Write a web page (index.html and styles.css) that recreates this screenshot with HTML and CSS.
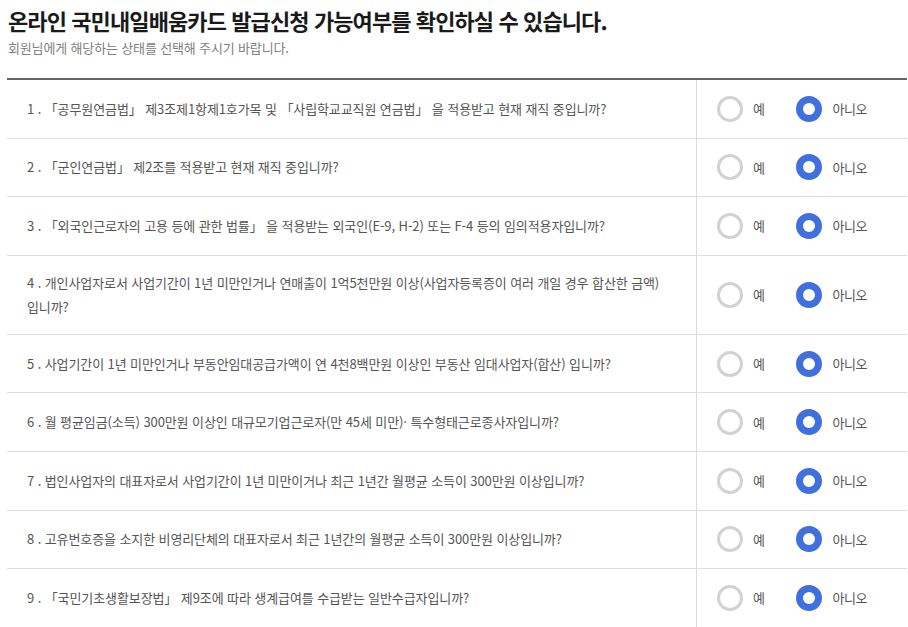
FILE: index.html
```html
<!DOCTYPE html>
<html lang="ko">
<head>
<meta charset="utf-8">
<title>국민내일배움카드 발급신청</title>
<link rel="stylesheet" href="styles.css">
</head>
<body>
<div class="page">
  <h1 class="title">온라인 국민내일배움카드 발급신청 가능여부를 확인하실 수 있습니다.</h1>
  <p class="subtitle">회원님에게 해당하는 상태를 선택해 주시기 바랍니다.</p>
  <div class="table">
    <div class="row">
      <div class="q">1 . 「공무원연금법」 제3조제1항제1호가목 및 「사립학교교직원 연금법」 을 적용받고 현재 재직 중입니까?</div>
      <div class="a"><span class="radio"></span><span class="lbl">예</span><span class="radio on"></span><span class="lbl">아니오</span></div>
    </div>
    <div class="row">
      <div class="q">2 . 「군인연금법」 제2조를 적용받고 현재 재직 중입니까?</div>
      <div class="a"><span class="radio"></span><span class="lbl">예</span><span class="radio on"></span><span class="lbl">아니오</span></div>
    </div>
    <div class="row">
      <div class="q">3 . 「외국인근로자의 고용 등에 관한 법률」 을 적용받는 외국인(E-9, H-2) 또는 F-4 등의 임의적용자입니까?</div>
      <div class="a"><span class="radio"></span><span class="lbl">예</span><span class="radio on"></span><span class="lbl">아니오</span></div>
    </div>
    <div class="row">
      <div class="q">4 . 개인사업자로서 사업기간이 1년 미만인거나 연매출이 1억5천만원 이상(사업자등록증이 여러 개일 경우 합산한 금액)<br>입니까?</div>
      <div class="a"><span class="radio"></span><span class="lbl">예</span><span class="radio on"></span><span class="lbl">아니오</span></div>
    </div>
    <div class="row">
      <div class="q">5 . 사업기간이 1년 미만인거나 부동안임대공급가액이 연 4천8백만원 이상인 부동산 임대사업자(합산) 입니까?</div>
      <div class="a"><span class="radio"></span><span class="lbl">예</span><span class="radio on"></span><span class="lbl">아니오</span></div>
    </div>
    <div class="row">
      <div class="q">6 . 월 평균임금(소득) 300만원 이상인 대규모기업근로자(만 45세 미만)· 특수형태근로종사자입니까?</div>
      <div class="a"><span class="radio"></span><span class="lbl">예</span><span class="radio on"></span><span class="lbl">아니오</span></div>
    </div>
    <div class="row">
      <div class="q">7 . 법인사업자의 대표자로서 사업기간이 1년 미만이거나 최근 1년간 월평균 소득이 300만원 이상입니까?</div>
      <div class="a"><span class="radio"></span><span class="lbl">예</span><span class="radio on"></span><span class="lbl">아니오</span></div>
    </div>
    <div class="row">
      <div class="q">8 . 고유번호증을 소지한 비영리단체의 대표자로서 최근 1년간의 월평균 소득이 300만원 이상입니까?</div>
      <div class="a"><span class="radio"></span><span class="lbl">예</span><span class="radio on"></span><span class="lbl">아니오</span></div>
    </div>
    <div class="row">
      <div class="q">9 . 「국민기초생활보장법」 제9조에 따라 생계급여를 수급받는 일반수급자입니까?</div>
      <div class="a"><span class="radio"></span><span class="lbl">예</span><span class="radio on"></span><span class="lbl">아니오</span></div>
    </div>
  </div>
</div>
</body>
</html>
```
FILE: styles.css
```css
* { box-sizing: border-box; }
html, body { margin: 0; padding: 0; background: #fff; }
body {
  font-family: "Noto Sans CJK KR", "Noto Sans", sans-serif;
  color: #555;
}
.page {
  padding: 5px 1px 0 7px;
}
.title {
  margin: 0 0 0 1px;
  font-size: 22px;
  line-height: 30px;
  font-weight: 700;
  color: #1a1a1a;
  letter-spacing: -0.9px;
}
.subtitle {
  margin: 4px 0 0 1px;
  font-size: 13px;
  line-height: 18px;
  color: #808080;
  letter-spacing: -0.15px;
}
.table {
  margin-top: 21px;
  border-top: 2px solid #666;
}
.row {
  position: relative;
  display: flex;
  min-height: 58.6px;
  border-bottom: 1px solid #ddd;
}
.row::after {
  content: "";
  position: absolute;
  left: 689px;
  top: 0;
  bottom: 0;
  width: 1px;
  background: #ddd;
}
.q {
  width: 690px;
  flex: none;
  align-self: center;
  padding: 15px 20px;
  font-size: 13px;
  line-height: 24px;
  letter-spacing: -0.1px;
  color: #555;
}
.a {
  flex: 1;
  display: flex;
  align-items: center;
  padding-left: 20px;
}
.radio {
  width: 26px;
  height: 26px;
  border-radius: 50%;
  border: 3px solid #d2d2d2;
  background: #fff;
  flex: none;
}
.radio.on {
  border: 7px solid #4070de;
}
.lbl {
  font-size: 13px;
  color: #555;
  margin-left: 10px;
  margin-right: 32px;
  letter-spacing: -0.5px;
}
```
